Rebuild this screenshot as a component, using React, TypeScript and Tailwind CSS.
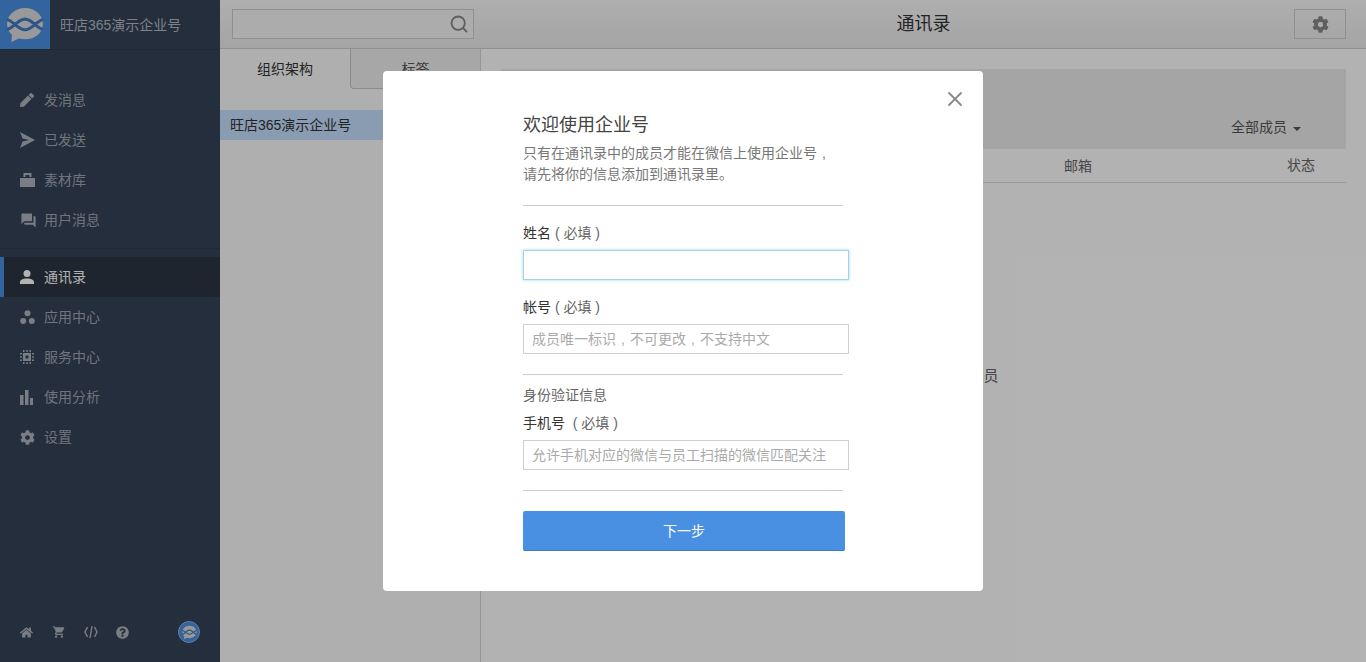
import { FaCog, FaHome, FaPen, FaQuestionCircle } from 'react-icons/fa'
import { MdQuestionAnswer, MdShoppingCart } from 'react-icons/md'
import { Search, X } from 'lucide-react'
import type { ReactNode } from 'react'

function Logo({ size }: { size: number }) {
    return (
        <svg width={size} height={size} viewBox="0 0 36 36">
            <path d="M18 2C8.600 2 1 8.700 1 17c0 4 1.800 7.700 4.700 10.400L5 34l7-3.200c1.900.5 3.900.8 6 .8 9.400 0 17-6.500 17-14.600S27.400 2 18 2z" fill="#dcdcdc" />
            <path d="M1 13C6 13 11 22.500 18 22.500S30 13 35 13M1 22C6 22 11 12.500 18 12.500S30 22 35 22" fill="none" stroke="#3f7cc4" strokeWidth="3" />
        </svg>
    )
}

function SendIcon() {
    return (
        <svg width="15" height="16" viewBox="0 0 15 16" fill="currentColor">
            <path d="M0 0 15 8 0 16l2.500-6.500L9 8l-6.500-1.500z" />
        </svg>
    )
}

function BagIcon() {
    return (
        <svg width="15" height="14" viewBox="0 0 15 14" fill="currentColor">
            <path d="M0 5h15v9H0zM3.500 4V0h8v4h-2V2h-4v2z" />
        </svg>
    )
}

function PersonIcon() {
    return (
        <svg width="14" height="14" viewBox="0 0 14 14" fill="currentColor">
            <circle cx="7" cy="3.500" r="3.500" />
            <path d="M0 14v-2c0-2 3-3.500 7-3.500s7 1.500 7 3.500v2z" />
        </svg>
    )
}

function ThreeDots() {
    return (
        <svg width="15" height="15" viewBox="0 0 15 15" fill="currentColor">
            <circle cx="7.500" cy="3.200" r="3" />
            <circle cx="3.200" cy="11" r="3" />
            <circle cx="11.800" cy="11" r="3" />
        </svg>
    )
}

function ChipIcon() {
    return (
        <svg width="14" height="14" viewBox="0 0 14 14" fill="currentColor">
            <path fillRule="evenodd" d="M3 3h8v8H3zM5.500 5.500v3h3v-3z" />
            <path d="M3 0h1.500v2H3zM6.250 0h1.500v2h-1.500zM9.500 0H11v2H9.500zM3 12h1.500v2H3zM6.250 12h1.500v2h-1.500zM9.500 12H11v2H9.500zM0 3h2v1.500H0zM0 6.250h2v1.500H0zM0 9.500h2V11H0zM12 3h2v1.500h-2zM12 6.250h2v1.500h-2zM12 9.500h2V11h-2z" />
        </svg>
    )
}

function Bars() {
    return (
        <svg width="14" height="15" viewBox="0 0 14 15" fill="currentColor">
            <rect x="0" y="5" width="3.500" height="10" />
            <rect x="5" y="0" width="3.500" height="15" />
            <rect x="10" y="8" width="3" height="7" />
        </svg>
    )
}

function CodeIcon() {
    return (
        <svg width="14" height="14" viewBox="0 0 14 14" fill="none" stroke="currentColor" strokeWidth="1.500">
            <path d="M3.500 2 1 7l2.500 5M10.500 2 13 7l-2.500 5M8 1 6 13" />
        </svg>
    )
}

function Comma() {
    return <span className="inline-block w-[14px] text-center">,</span>
}

function NavItem({ icon, label, active }: { icon: ReactNode; label: string; active?: boolean }) {
    return (
        <div className={`flex h-10 items-center text-sm ${active ? 'border-l-4 border-[#4a90e2] bg-[#2b3542] pl-4 text-white' : 'pl-5 text-[#a0a8b4]'}`}>
            <span className={`flex w-6 shrink-0 items-center ${active ? 'text-white' : 'text-[#aeb4bd]'}`}>{icon}</span>
            {label}
        </div>
    )
}

function Sidebar() {
    return (
        <aside className="flex w-[220px] shrink-0 flex-col bg-[#354256]">
            <div className="flex h-[50px] items-center border-b border-[#2f3b4e]">
                <div className="flex h-[49px] w-[50px] items-center justify-center bg-[#4a90e2]">
                    <Logo size={38} />
                </div>
                <span className="ml-2.5 text-sm text-[#b4bac4]">旺店365演示企业号</span>
            </div>
            <nav className="mt-[30px] border-b border-[#2f3b4e] pb-2">
                <NavItem icon={<FaPen size={14} />} label="发消息" />
                <NavItem icon={<SendIcon />} label="已发送" />
                <NavItem icon={<BagIcon />} label="素材库" />
                <NavItem icon={<MdQuestionAnswer size={17} />} label="用户消息" />
            </nav>
            <nav className="mt-2">
                <NavItem active icon={<PersonIcon />} label="通讯录" />
                <NavItem icon={<ThreeDots />} label="应用中心" />
                <NavItem icon={<ChipIcon />} label="服务中心" />
                <NavItem icon={<Bars />} label="使用分析" />
                <NavItem icon={<FaCog size={15} />} label="设置" />
            </nav>
            <div className="mt-auto flex h-[60px] items-center pl-5 text-[#aeb4bd]">
                <span className="flex w-8"><FaHome size={13} /></span>
                <span className="flex w-8"><MdShoppingCart size={14} /></span>
                <span className="flex w-8"><CodeIcon /></span>
                <span className="flex w-8"><FaQuestionCircle size={13} /></span>
                <span className="ml-[30px] flex h-[22px] w-[22px] items-center justify-center rounded-full border border-[#8fb8e8] bg-[#4a90e2]">
                    <Logo size={15} />
                </span>
            </div>
        </aside>
    )
}

function Content() {
    return (
        <div className="flex min-w-0 flex-1 flex-col">
            <header className="flex h-[49px] shrink-0 items-center border-b border-[#cfcfcf] bg-gradient-to-b from-[#fafafa] to-[#ececec] pr-5">
                <div className="w-[261px] shrink-0 pl-3">
                    <div className="flex h-[30px] w-[242px] items-center justify-end border border-[#cfcfcf] bg-[#f6f6f6] pr-1 text-[#888]">
                        <Search size={20} strokeWidth={2.200} />
                    </div>
                </div>
                <h1 className="flex-1 pl-[72px] text-center text-lg text-[#333]">通讯录</h1>
                <div className="flex h-[30px] w-[52px] items-center justify-center border border-[#cfcfcf] text-[#888]">
                    <FaCog size={17} />
                </div>
            </header>
            <div className="flex min-h-0 flex-1 bg-white">
                <div className="w-[261px] shrink-0 border-r border-[#d8d8d8] bg-[#fbfbfb]">
                    <div className="flex h-10 text-sm">
                        <div className="flex w-[130px] items-center justify-center text-[#333]">组织架构</div>
                        <div className="flex w-[130px] items-center justify-center rounded-bl-sm border-b border-l border-[#c8c8c8] bg-[#f0f0f0] text-[#555]">标签</div>
                    </div>
                    <div className="mt-[21px] flex h-[30px] items-center bg-[#c6e0ff] pl-2.5 text-sm text-[#333]">旺店365演示企业号</div>
                </div>
                <div className="min-w-0 flex-1 px-5 pt-5">
                    <div className="flex h-20 items-end justify-end bg-[#eceded] pb-3 pr-[45px] text-sm text-[#555]">
                        全部成员
                        <span className="mb-1.5 ml-1.5 h-0 w-0 border-x-4 border-t-4 border-x-transparent border-t-[#555]" />
                    </div>
                    <div className="relative h-[34px] border-b border-[#dcdcdc] text-sm text-[#666]">
                        <span className="absolute left-[563px] top-[7px]">邮箱</span>
                        <span className="absolute left-[786px] top-[6px]">状态</span>
                    </div>
                    <p className="mt-[182px] text-center text-[15px] text-[#666]">当前部门下无任何成员</p>
                </div>
            </div>
        </div>
    )
}

function Field({ label, gap, placeholder, focus }: { label: string; gap?: boolean; placeholder?: ReactNode; focus?: boolean }) {
    return (
        <div>
            <label className="block h-5 whitespace-pre text-sm leading-5 text-[#333]">
                {label}<span className="text-[#666]">{gap ? '  ( 必填 )' : ' ( 必填 )'}</span>
            </label>
            <div className={`mt-[7px] flex h-[30px] w-[326px] items-center whitespace-pre border pl-2 text-sm ${focus ? 'border-[#9ed3ea] shadow-[0_0_3px_#9ed3ea]' : 'border-[#d0d0d0]'} text-[#aaa]`}>
                <span>{placeholder}</span>
            </div>
        </div>
    )
}

export default function App() {
    return (
        <div className="relative flex h-[662px] w-[1366px] overflow-hidden bg-white font-['Liberation_Sans','Noto_Sans_CJK_SC',sans-serif]">
            <Sidebar />
            <Content />
            <div className="absolute inset-0 bg-black/30" />
            <div className="absolute left-[383px] top-[71px] h-[520px] w-[600px] rounded-sm bg-white pl-[140px] pt-[42px]">
                <X className="absolute right-[16px] top-[16px] text-[#888]" size={24} strokeWidth={1.800} />
                <h2 className="text-lg leading-6 text-[#444]">欢迎使用企业号</h2>
                <p className="mt-[6px] w-[320px] text-sm leading-[21px] text-[#777]">
                    只有在通讯录中的成员才能在微信上使用企业号<Comma /><br />请先将你的信息添加到通讯录里。
                </p>
                <hr className="mt-5 w-[320px] border-[#ccc]" />
                <div className="mt-[17px]">
                    <Field label="姓名" focus />
                </div>
                <div className="mt-[17px]">
                    <Field label="帐号" placeholder={<>成员唯一标识<Comma />不可更改<Comma />不支持中文</>} />
                </div>
                <hr className="mt-5 w-[320px] border-[#ccc]" />
                <p className="mt-[10px] h-5 text-sm leading-5 text-[#666]">身份验证信息</p>
                <div className="mt-2">
                    <Field label="手机号" gap placeholder="允许手机对应的微信与员工扫描的微信匹配关注" />
                </div>
                <hr className="mt-5 w-[320px] border-[#ccc]" />
                <button className="mt-5 flex h-10 w-[322px] items-center justify-center rounded-[2px] border-b border-[#3b7cc9] bg-[#4a90e2] text-sm text-white">下一步</button>
            </div>
        </div>
    )
}
